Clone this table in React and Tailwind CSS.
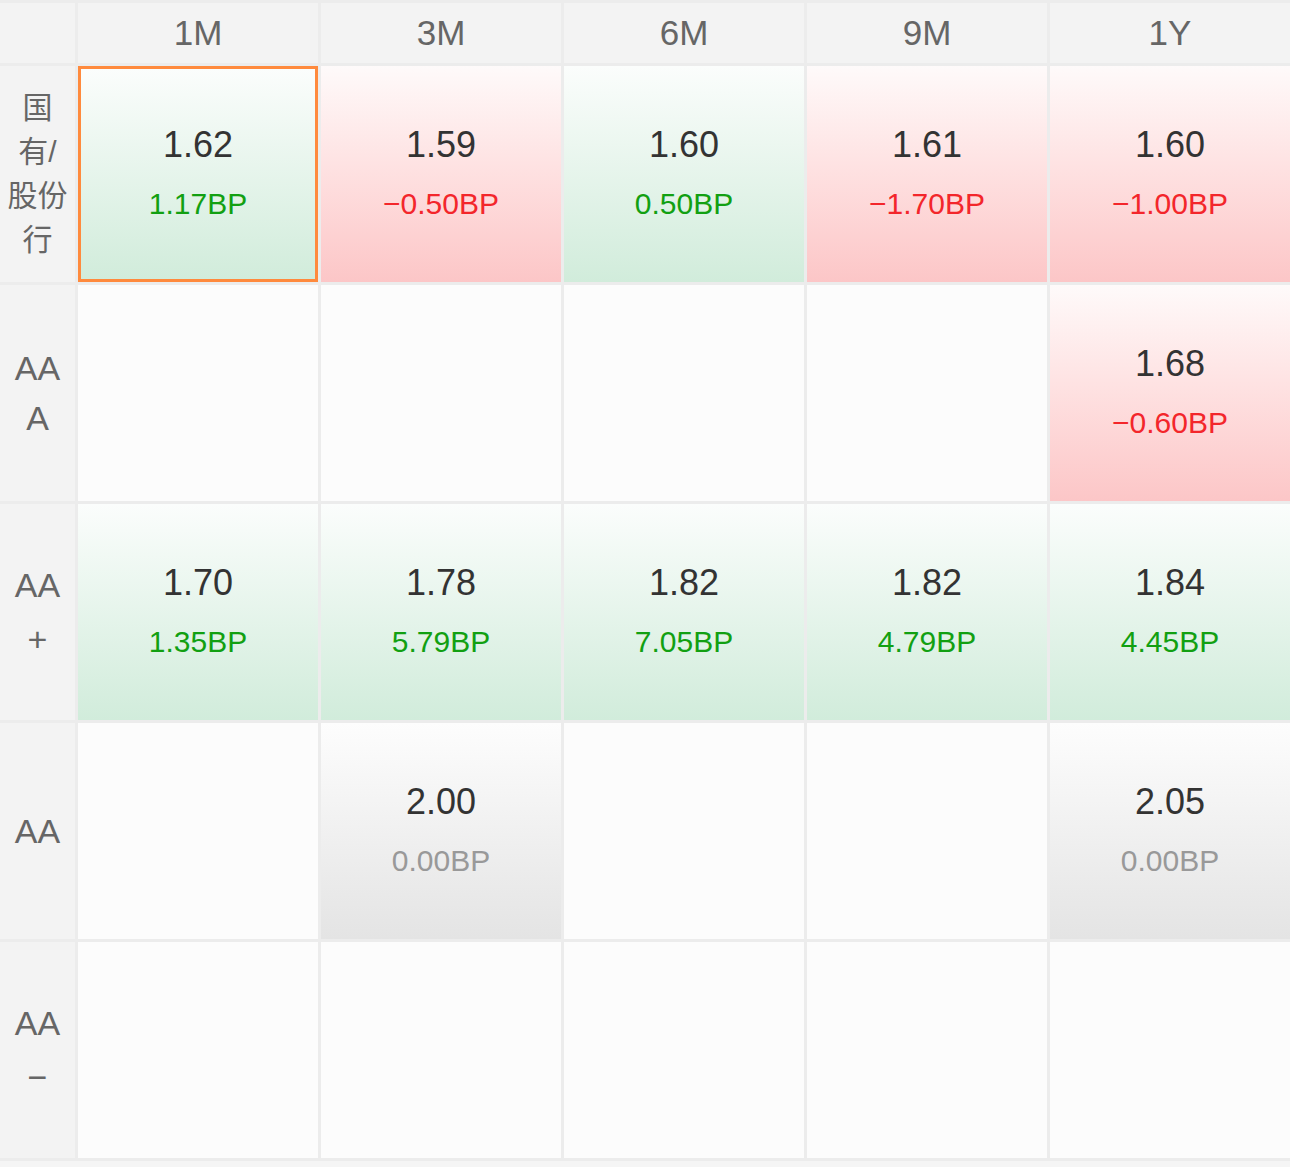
import React from "react";

const tenors = ["1M", "3M", "6M", "9M", "1Y"];

const rows = [
  {
    label: ["国", "有/", "股份", "行"],
    lead: "leading-[44px] text-[30px]",
    cells: [
      { v: "1.62", d: "1.17BP", t: "up", selected: true },
      { v: "1.59", d: "−0.50BP", t: "down" },
      { v: "1.60", d: "0.50BP", t: "up" },
      { v: "1.61", d: "−1.70BP", t: "down" },
      { v: "1.60", d: "−1.00BP", t: "down" },
    ],
  },
  {
    label: ["AA", "A"],
    lead: "leading-[50px] text-[34px]",
    cells: [null, null, null, null, { v: "1.68", d: "−0.60BP", t: "down" }],
  },
  {
    label: ["AA", "+"],
    lead: "leading-[54px] text-[34px]",
    cells: [
      { v: "1.70", d: "1.35BP", t: "up" },
      { v: "1.78", d: "5.79BP", t: "up" },
      { v: "1.82", d: "7.05BP", t: "up" },
      { v: "1.82", d: "4.79BP", t: "up" },
      { v: "1.84", d: "4.45BP", t: "up" },
    ],
  },
  {
    label: ["AA"],
    lead: "leading-[50px] text-[34px]",
    cells: [null, { v: "2.00", d: "0.00BP", t: "flat" }, null, null, { v: "2.05", d: "0.00BP", t: "flat" }],
  },
  {
    label: ["AA", "−"],
    lead: "leading-[54px] text-[34px]",
    cells: [null, null, null, null, null],
  },
];

const tone = {
  up: {
    bg: "bg-linear-to-b from-[#fbfdfc] to-[#d1ecdb]",
    text: "text-[#12a012]",
  },
  down: {
    bg: "bg-linear-to-b from-[#fefafa] to-[#fcc6c7]",
    text: "text-[#f3262b]",
  },
  flat: {
    bg: "bg-linear-to-b from-[#fdfdfd] to-[#e4e4e4]",
    text: "text-[#999999]",
  },
};

const Cell = ({ cell }) => {
  if (!cell) return <div className="bg-[#fcfcfc]" />;
  const c = tone[cell.t];
  return (
    <div
      className={`flex flex-col items-center justify-center ${c.bg} ${
        cell.selected ? "border-[3px] border-[#ff8a3d]" : ""
      }`}
    >
      <div className="text-[36px] leading-[59px] text-[#333333]">{cell.v}</div>
      <div className={`text-[30px] leading-[59px] ${c.text}`}>{cell.d}</div>
    </div>
  );
};

const App = () => {
  return (
    <div
      className="min-h-screen bg-[#f5f5f5]"
      style={{ fontFamily: '"Liberation Sans", "Noto Sans CJK SC", sans-serif' }}
    >
      <div className="grid grid-cols-[75px_repeat(5,240px)] grid-rows-[60px_repeat(5,216px)] gap-[3px] bg-[#ececec] py-[3px]">
        <div className="bg-[#f3f3f3]" />
        {tenors.map((t) => (
          <div
            key={t}
            className="flex items-center justify-center bg-[#f3f3f3] text-[35px] text-[#666666]"
          >
            {t}
          </div>
        ))}
        {rows.map((row, i) => (
          <React.Fragment key={i}>
            <div className="flex flex-col items-center justify-center bg-[#f3f3f3] text-[#666666]">
              {row.label.map((l, j) => (
                <div key={j} className={row.lead}>
                  {l}
                </div>
              ))}
            </div>
            {row.cells.map((cell, k) => (
              <Cell key={k} cell={cell} />
            ))}
          </React.Fragment>
        ))}
      </div>
    </div>
  );
};

export default App;
